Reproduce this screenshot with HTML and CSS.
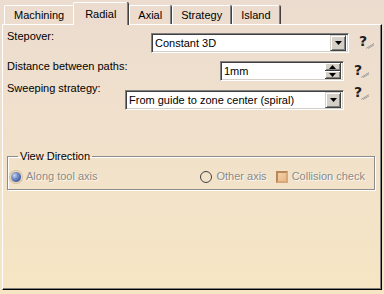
FILE: index.html
```html
<!DOCTYPE html>
<html lang="en">
<head>
    <meta charset="UTF-8">
    <title>Radial</title>
    <link rel="stylesheet" href="styles.css">
</head>
<body>
    <div class="tabs">
        <div class="tab">Machining</div>
        <div class="tab active">Radial</div>
        <div class="tab">Axial</div>
        <div class="tab">Strategy</div>
        <div class="tab">Island</div>
    </div>

    <div class="panel">
        <div class="row row-stepover">
            <span class="label">Stepover:</span>
            <div class="combo combo-stepover">
                <span class="combo-text">Constant 3D</span>
                <span class="drop-btn">
                    <svg width="7" height="4" viewBox="0 0 7 4"><path d="M0 0h7L3.5 4z" fill="#000"/></svg>
                </span>
            </div>
            <span class="help">?<svg class="pen" width="10" height="6" viewBox="0 0 10 6"><path d="M1 5.5L9 0.5M3 5.5L9 2" stroke="#a0a0a0" stroke-width="1" fill="none"/></svg></span>
        </div>

        <div class="row row-distance">
            <span class="label">Distance between paths:</span>
            <div class="spin">
                <span class="combo-text">1mm</span>
                <span class="spin-btns">
                    <span class="spin-btn"><svg width="7" height="4" viewBox="0 0 7 4"><path d="M0 4h7L3.5 0z" fill="#000"/></svg></span>
                    <span class="spin-btn"><svg width="7" height="4" viewBox="0 0 7 4"><path d="M0 0h7L3.5 4z" fill="#000"/></svg></span>
                </span>
            </div>
            <span class="help">?<svg class="pen" width="10" height="6" viewBox="0 0 10 6"><path d="M1 5.5L9 0.5M3 5.5L9 2" stroke="#a0a0a0" stroke-width="1" fill="none"/></svg></span>
        </div>

        <div class="row row-sweeping">
            <span class="label">Sweeping strategy:</span>
            <div class="combo combo-sweeping">
                <span class="combo-text">From guide to zone center (spiral)</span>
                <span class="drop-btn">
                    <svg width="7" height="4" viewBox="0 0 7 4"><path d="M0 0h7L3.5 4z" fill="#000"/></svg>
                </span>
            </div>
            <span class="help">?<svg class="pen" width="10" height="6" viewBox="0 0 10 6"><path d="M1 5.5L9 0.5M3 5.5L9 2" stroke="#a0a0a0" stroke-width="1" fill="none"/></svg></span>
        </div>

        <fieldset class="group">
            <legend>View Direction</legend>
            <div class="options">
                <div class="option">
                    <span class="radio checked"></span>
                    <span class="disabled">Along tool axis</span>
                </div>
                <div class="option-right">
                    <div class="option">
                        <span class="radio"></span>
                        <span class="disabled">Other axis</span>
                    </div>
                    <div class="option">
                        <span class="checkbox"></span>
                        <span class="disabled">Collision check</span>
                    </div>
                </div>
            </div>
        </fieldset>
    </div>
</body>
</html>
```

FILE: styles.css
```css
* {
    margin: 0;
    padding: 0;
    box-sizing: border-box;
}

html, body {
    height: 100%;
}

body {
    font-family: "Liberation Sans", Arial, sans-serif;
    font-size: 11px;
    line-height: 13px;
    color: #000;
    background: linear-gradient(#ecdccf, #f0e0cc 40%, #f6e6c4);
    padding: 0 2px;
}

/* tab strip */
.tabs {
    display: flex;
    align-items: flex-end;
    height: 24px;
    padding-left: 2px;
}

.tab {
    height: 19px;
    padding: 3px 9px 0;
    border-top: 1px solid #fff;
    border-left: 1px solid #fff;
    border-right: 1px solid #808080;
    border-radius: 2px 2px 0 0;
    box-shadow: 1px 0 0 #404040;
    margin-right: 1px;
}

.tab.active {
    position: relative;
    height: 23px;
    margin: 0 -1px -1px -2px;
    padding: 5px 11px 0;
    background: #ecdccf;
    z-index: 1;
}

.tab.active + .tab {
    margin-left: 2px;
    padding: 3px 8px 0;
}

.tab.active + .tab + .tab,
.tab.active + .tab + .tab + .tab {
    padding: 3px 8px 0;
}

/* main page */
.panel {
    height: 266px;
    border-top: 1px solid #fff;
    border-left: 1px solid #fff;
    border-right: 1px solid #000;
    border-bottom: 1px solid #000;
    box-shadow: inset -1px -1px 0 #808080;
    padding: 0 4px;
}

.row {
    display: flex;
    align-items: flex-start;
}

.label {
    flex: 1;
}

.row-stepover {
    margin-top: 5px;
}

.row-stepover .combo {
    margin-top: 3px;
}

.row-distance {
    margin-top: 7px;
    padding-right: 4px;
}

.row-distance .spin {
    margin-top: 1px;
}

.row-sweeping {
    margin-top: 1px;
    padding-right: 4px;
}

.row-sweeping .combo {
    margin-top: 8px;
}

.combo, .spin {
    display: flex;
    align-items: center;
    height: 20px;
    background: #fff;
    border-top: 1px solid #808080;
    border-left: 1px solid #808080;
    border-right: 1px solid #fff;
    border-bottom: 1px solid #fff;
    box-shadow: inset 1px 1px 0 #404040, inset -1px -1px 0 #d4d0c8;
    padding: 2px;
}

.combo-stepover {
    width: 198px;
}

.combo-sweeping {
    width: 219px;
}

.spin {
    width: 124px;
}

.combo-text {
    flex: 1;
    padding-left: 1px;
    white-space: nowrap;
}

.drop-btn {
    display: flex;
    align-items: center;
    justify-content: center;
    width: 16px;
    height: 16px;
    background: #d4d0c8;
    border-top: 1px solid #d4d0c8;
    border-left: 1px solid #d4d0c8;
    border-right: 1px solid #404040;
    border-bottom: 1px solid #404040;
    box-shadow: inset 1px 1px 0 #fff, inset -1px -1px 0 #808080;
}

.spin-btns {
    display: flex;
    flex-direction: column;
}

.spin-btn {
    display: flex;
    align-items: center;
    justify-content: center;
    width: 16px;
    height: 8px;
    background: #d4d0c8;
    border-right: 1px solid #404040;
    border-bottom: 1px solid #404040;
    box-shadow: inset 1px 1px 0 #fff, inset -1px -1px 0 #808080;
}

.help {
    width: 22px;
    margin-left: 7px;
    padding-left: 3px;
    margin-top: 2px;
    font-family: "DejaVu Sans", sans-serif;
    font-weight: bold;
    font-size: 14px;
    line-height: 16px;
    color: #202020;
    white-space: nowrap;
}

.row-stepover .help {
    margin: 3px 0 0 6px;
    padding-left: 4px;
}

.pen {
    vertical-align: -3px;
    margin-left: -2px;
}

/* view direction group */
.group {
    margin: 40px 2px 0 0;
    border: 1px solid #8c8c8c;
    box-shadow: inset 1px 1px 0 #fff, 1px 1px 0 #fff;
    padding: 7px 9px 6px 2px;
}

.group legend {
    margin-left: 8px;
    padding: 0 2px;
}

.options {
    display: flex;
    justify-content: space-between;
    align-items: center;
}

.option-right {
    display: flex;
    gap: 9px;
}

.option {
    display: flex;
    align-items: center;
    gap: 4px;
}

.disabled {
    color: #8a8a8a;
    text-shadow: 1px 1px 0 #fff8ee;
}

.radio {
    width: 12px;
    height: 12px;
    border-radius: 50%;
    border: 1px solid #404040;
}

.radio.checked {
    border: 1px solid #e8d8b8;
    background: radial-gradient(circle at 35% 35%, #c8d8f0 0, #7890c8 35%, #3850a0 80%);
    box-shadow: 0 0 0 1px #d8c098;
}

.checkbox {
    width: 12px;
    height: 12px;
    border: 2px solid #d8a878;
    border-top-color: #b88858;
    border-left-color: #b88858;
    background: linear-gradient(135deg, #f4d0a8, #e8b888);
}
```
